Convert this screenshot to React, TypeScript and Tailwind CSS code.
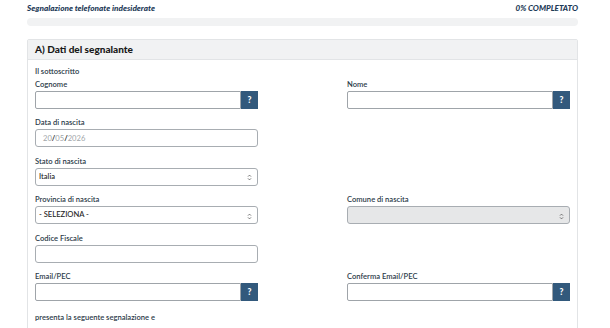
import React from "react";

const font = { fontFamily: "Lato, 'Open Sans', sans-serif" };

function Help() {
  return (
    <div className="w-[17px] h-[18px] bg-[#32597c] flex items-center justify-center text-white text-[8.5px] font-black leading-none">
      ?
    </div>
  );
}

function Label({ children }: { children: React.ReactNode }) {
  return <div className="h-[10px] leading-[10px] text-[7.6px] font-semibold text-[#2c3b49] whitespace-nowrap">{children}</div>;
}

function TextWithHelp({ label }: { label: string }) {
  return (
    <div className="flex flex-col gap-[2px]">
      <Label>{label}</Label>
      <div className="flex">
        <div className="w-[206px] h-[18px] border border-[#9fa4a9] bg-white rounded-l-[2px]" />
        <Help />
      </div>
    </div>
  );
}

function Chevron() {
  return (
    <svg width="5" height="7" viewBox="0 0 5 7" className="absolute right-[5px] top-[5.5px]">
      <path d="M1 2.6 L2.5 1.1 L4 2.6 M1 4.4 L2.5 5.9 L4 4.4" fill="none" stroke="#555" strokeWidth="0.8" />
    </svg>
  );
}

function Select({ label, value, disabled }: { label: string; value?: string; disabled?: boolean }) {
  return (
    <div className="flex flex-col gap-[2px]">
      <Label>{label}</Label>
      <div
        className={
          "relative w-[223px] h-[18px] border border-[#a8adb2] rounded-[3px] flex items-center pl-[3px] text-[7.6px] font-medium text-[#222] " +
          (disabled ? "bg-[#e6e7e8]" : "bg-white")
        }
      >
        {value}
        <Chevron />
      </div>
    </div>
  );
}

function PlainInput({ label, children }: { label: string; children?: React.ReactNode }) {
  return (
    <div className="flex flex-col gap-[2px]">
      <Label>{label}</Label>
      <div className="w-[223px] h-[18px] border border-[#a8adb2] rounded-[3px] bg-white flex items-center pl-[7px] text-[7.6px]">
        {children}
      </div>
    </div>
  );
}

export default function App() {
  return (
    <div className="w-[610px] h-[328px] bg-white overflow-hidden" style={font}>
      <div className="ml-[27px] w-[551px]">
        <div className="flex justify-between items-center h-[14px] pt-[2px]">
          <span className="text-[8.2px] italic font-black text-[#1d3a57]">Segnalazione telefonate indesiderate</span>
          <span className="text-[8px] italic font-black text-[#1d3a57]">0% COMPLETATO</span>
        </div>
        <div className="mt-[4px] h-[8px] rounded-full bg-[#f1f2f3]" />
        <div className="mt-[13px] border border-[#e2e4e6] rounded-t-[2px]">
          <div className="h-[20px] bg-[#f1f2f3] border-b border-[#e2e4e6] flex items-center px-[7px]">
            <span className="text-[10px] font-black text-[#1a1a1a]">A) Dati del segnalante</span>
          </div>
          <div className="px-[7px] pt-[6px] pb-[10px]">
            <Label>Il sottoscritto</Label>
            <div className="mt-[3px] grid grid-cols-[223px_223px] justify-between gap-y-[8.4px]">
              <TextWithHelp label="Cognome" />
              <TextWithHelp label="Nome" />
              <PlainInput label="Data di nascita">
                <span className="text-[#a0a4a8]">20</span>
                <span className="text-[#333] font-bold">/</span>
                <span className="text-[#a0a4a8]">05</span>
                <span className="text-[#333] font-bold">/</span>
                <span className="text-[#a0a4a8]">2026</span>
              </PlainInput>
              <div />
              <Select label="Stato di nascita" value="Italia" />
              <div />
              <Select label="Provincia di nascita" value="- SELEZIONA -" />
              <Select label="Comune di nascita" disabled />
              <PlainInput label="Codice Fiscale" />
              <div />
              <TextWithHelp label="Email/PEC" />
              <TextWithHelp label="Conferma Email/PEC" />
            </div>
            <div className="mt-[11px] h-[10px] leading-[10px] text-[7.6px] font-semibold text-[#2c3b49]">presenta la seguente segnalazione e</div>
          </div>
        </div>
      </div>
    </div>
  );
}
